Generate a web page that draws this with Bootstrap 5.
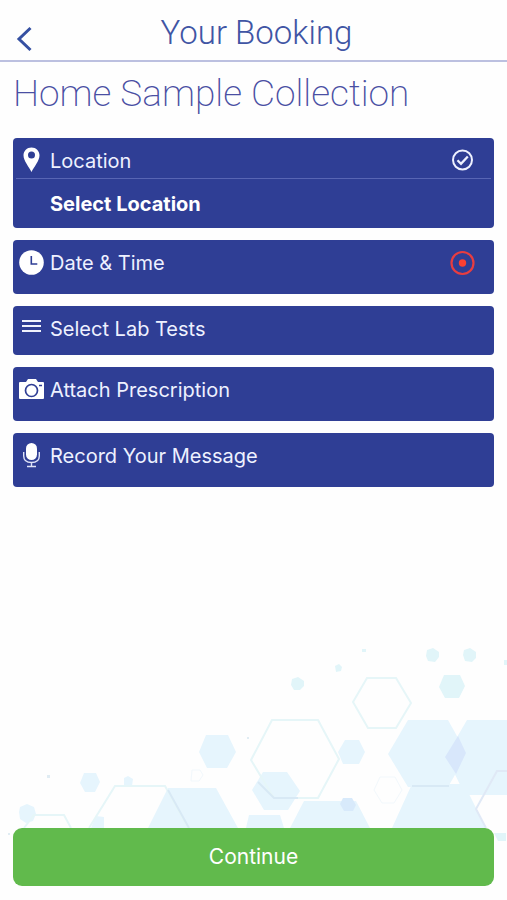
<!DOCTYPE html>
<html lang="en">
<head>
<meta charset="utf-8">
<meta name="viewport" content="width=device-width, initial-scale=1">
<title>Your Booking</title>
<link href="https://cdn.jsdelivr.net/npm/bootstrap@5.3.0/dist/css/bootstrap.min.css" rel="stylesheet">
<style>
  :root { --brand: #2f3e95; --title: #4055a4; --go: #61ba4c; }
  body { font-family: Inter, "Liberation Sans", sans-serif; background: #fefefe; color: var(--title); }
  .topbar { height: 62px; padding: 4px 13px 0; border-bottom: 2px solid #bcc0e0; }
  .topbar h1 { font-family: Roboto, "Liberation Sans", sans-serif; font-size: 33px; line-height: 42px; font-weight: 300; }
  .back { width: 24px; height: 28px; color: #3550a2; margin-top: 21px; }
  .side { width: 18px; }
  .page { padding: 10px 13px 14px; }
  .page h2 { font-family: Roboto, "Liberation Sans", sans-serif; font-size: 37px; line-height: 44px; font-weight: 200; margin-bottom: 22px; color: #4a4fa3; }
  .steps { gap: 12px; }
  .step { background: var(--brand); border-radius: 4px; color: #eef1ff; font-size: 20px; line-height: 30px; }
  .step-row { min-height: 54px; padding: 8px 19px 8px 6px; gap: 6px; color: inherit; background: none; border: 0; }
  .step-row.compact { min-height: 49px; }
  .step-row.headed { min-height: 40px; padding-bottom: 2px; }
  .rule { height: 1px; margin: 0 3px; background: #5865b4; }
  .choice { padding: 10px 37px 9px; font-weight: 700; color: #fff; background: none; border: 0; }
  .ico { width: 25px; height: 30px; flex: none; }
  .go { background: var(--go); color: #fff; font-size: 21px; line-height: 34px; padding: 12px; border: 0; border-radius: 9px; }
  .backdrop-art { bottom: 0; right: 0; width: 507px; height: 260px; z-index: -1; }
</style>
<script src="https://cdn.jsdelivr.net/npm/bootstrap@5.3.0/dist/js/bootstrap.bundle.min.js"></script>
</head>
<body>
<div class="position-relative z-0 d-flex flex-column min-vh-100 overflow-hidden">
  <svg class="backdrop-art position-absolute" viewBox="0 0 507 260" aria-hidden="true">
    <g fill="#e6f5fd">
      <path d="M206 95h22l8 17-9 16h-20l-8-16zM408 80h40l19 34-19 33h-40l-20-33zM467 80h40v75h-42l-19-39zM412 144h52l22 44h-94zM304 161h52l14 27h-80zM249 175h31l4 13h-38zM168 148h48l22 40h-90zM345 100h14l6 12-6 12h-16l-5-12zM263 132h24l13 19-12 19h-24l-12-20z"/>
      <path d="M84 133h12l4 9-5 10H85l-5-9zM20 167l7-3 7 3 2 7-3 7-7 2-6-4-1-7zM93 198h8v7l-3 4-5-4zM96 176l8 1v11H91zM124 138l4-2 5 3-1 7h-8zM151 205h35v5h-35zM247 205h17v6h-15z"/>
    </g>
    <g fill="#e1f5f9">
      <path d="M292 39l6-2 6 4v5l-4 4h-6l-3-5zM335 26l4-2 3 3-1 4-5 1zM427 10l6-2 6 4v5l-4 5-7-1-2-5zM464 10l6-2 6 4v6l-4 4-7-1-2-6zM444 35h16l5 11-6 12h-14l-6-11zM504 20h3v5h-3zM362 9h4v3h-4zM494 193h12v8h-8z"/>
    </g>
    <path d="M458 96l8 17-10 21-11-17z" fill="#d8e7fb"/>
    <path d="M343 158h9l4 7-3 6h-9l-4-7z" fill="#d8eafb"/>
    <g fill="none" stroke="#e6f6f8" stroke-width="2">
      <path d="M272 80h46l21 39-21 39h-44l-23-38zM367 38h29l15 25-15 25h-28l-15-26zM89 188l26-42h50l23 42M24 188l10-13h30l7 13"/>
    </g>
    <g fill="none" stroke="#d8e9f5" stroke-width="2">
      <path d="M258 142l16 16h24M412 146h37M168 150l21 38"/>
      <path stroke="#e0e9f6" d="M507 131h-10l-21 38 10 19"/>
    </g>
    <g fill="none" stroke="#f2f8fc"><path d="M380 137h15l7 13-8 13h-12l-8-13zM192 130h8l3 5-4 6h-8z"/></g>
    <path d="M47 135h3v3h-3zM247 97h2v2h-2zM8 193h2v2H8z" fill="#e0ecf3"/>
  </svg>

  <header class="topbar d-flex align-items-start justify-content-between">
    <button type="button" class="btn p-0 border-0 back d-flex align-items-center" aria-label="Back">
      <svg width="24" height="28" viewBox="0 0 24 28" fill="none" stroke="currentColor" stroke-width="3"><path d="M17.500 3L6 14L17.500 25"/></svg>
    </button>
    <h1 class="mb-0 mt-2">Your Booking</h1>
    <span class="side"></span>
  </header>

  <main class="page d-flex flex-column flex-grow-1">
    <h2>Home Sample Collection</h2>
    <div class="steps d-flex flex-column">
      <section class="step">
        <button type="button" class="step-row headed d-flex align-items-start w-100 text-start">
          <svg class="ico" viewBox="0 0 25 30" fill="#fff" fill-rule="evenodd"><path d="M12.500 1.500C8 1.500 4.500 5 4.500 9.300C4.500 15 10 21 12.500 26C15 21 20.500 15 20.500 9.300C20.500 5 17 1.500 12.500 1.500zM12.500 5.500a3.500 3.500 0 1 1 0 7a3.500 3.500 0 0 1 0-7z"/></svg>
          <span class="flex-grow-1">Location</span>
          <svg class="ico" viewBox="0 0 25 30" fill="none" stroke="#eef1ff" stroke-width="2"><circle cx="12.500" cy="14" r="9.500"/><path stroke-width="2.300" d="M7.500 14.300l3.500 3.500l6.800-7.300"/></svg>
        </button>
        <div class="rule"></div>
        <button type="button" class="choice d-block w-100 text-start">Select Location</button>
      </section>
      <section class="step">
        <button type="button" class="step-row d-flex align-items-start w-100 text-start">
          <svg class="ico" viewBox="0 0 25 30"><circle cx="12.500" cy="14.500" r="12.300" fill="#fff"/><path d="M12.300 8v8h6" fill="none" stroke="#2f3e95" stroke-width="1.600"/></svg>
          <span class="flex-grow-1">Date &amp; Time</span>
          <svg class="ico" viewBox="0 0 25 30"><circle cx="12.500" cy="15" r="11" fill="none" stroke="#e83d40" stroke-width="2.200"/><circle cx="12.500" cy="15" r="3.700" fill="#fb4032"/></svg>
        </button>
      </section>
      <section class="step">
        <button type="button" class="step-row compact d-flex align-items-start w-100 text-start">
          <svg class="ico" viewBox="0 0 25 30" stroke="#f0f2fc" stroke-width="2"><path d="M3 7h19M3 12h19M3 17h19"/></svg>
          <span>Select Lab Tests</span>
        </button>
      </section>
      <section class="step">
        <button type="button" class="step-row d-flex align-items-start w-100 text-start">
          <svg class="ico" viewBox="0 0 25 30"><path fill="#fff" d="M0 8q0-1 1-1h6l2-3h8l2 3h5q1 0 1 1v15q0 1-1 1H1q-1 0-1-1z"/><circle cx="12.500" cy="15.500" r="6" fill="none" stroke="#2f3e95" stroke-width="1.700"/><path d="M20 10.500h3" stroke="#2f3e95" stroke-width="1.500"/></svg>
          <span>Attach Prescription</span>
        </button>
      </section>
      <section class="step">
        <button type="button" class="step-row d-flex align-items-start w-100 text-start">
          <svg class="ico" viewBox="0 0 25 30"><rect x="7" y="2" width="11" height="17" rx="5.500" fill="#fff"/><path d="M4.700 11v4q0 6.500 7.800 6.500T20.300 15v-4M12.500 21v4.500M8 25.500h9" fill="none" stroke="#dfe3f8" stroke-width="1.400"/></svg>
          <span>Record Your Message</span>
        </button>
      </section>
    </div>
    <button type="button" class="go w-100 mt-auto">Continue</button>
  </main>
</div>
</body>
</html>
